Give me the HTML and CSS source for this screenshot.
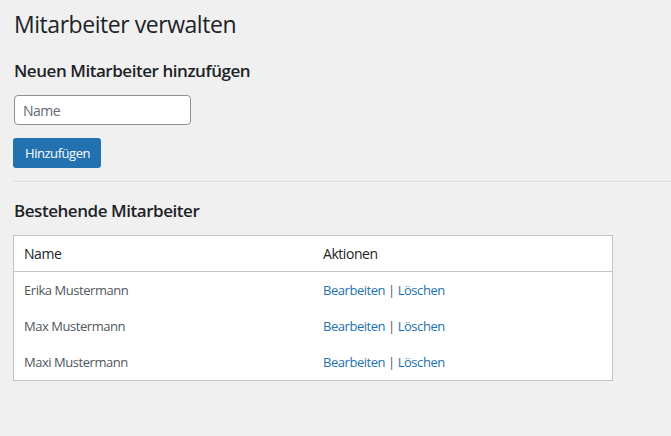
FILE: index.html
```html
<!DOCTYPE html>
<html lang="de">
    <head>
        <meta charset="UTF-8">
        <meta name="viewport" content="width=device-width, initial-scale=1.0">
        <title>Mitarbeiter verwalten</title>
        <link rel="stylesheet" href="styles.css">
    </head>

    <body>
        <div class="wrap">

            <h1>Mitarbeiter verwalten</h1>

            <!-- Neuer Mitarbeiter -->
            <h2>Neuen Mitarbeiter hinzufügen</h2>
            <form class="add-form">
                <input type="text" name="name" placeholder="Name">
                <button type="submit">Hinzufügen</button>
            </form>

            <hr>

            <!-- Liste -->
            <h2>Bestehende Mitarbeiter</h2>
            <table class="list">
                <thead>
                    <tr>
                        <th>Name</th>
                        <th>Aktionen</th>
                    </tr>
                </thead>
                <tbody>
                    <tr>
                        <td>Erika Mustermann</td>
                        <td><a href="#">Bearbeiten</a> | <a href="#">Löschen</a></td>
                    </tr>
                    <tr>
                        <td>Max Mustermann</td>
                        <td><a href="#">Bearbeiten</a> | <a href="#">Löschen</a></td>
                    </tr>
                    <tr>
                        <td>Maxi Mustermann</td>
                        <td><a href="#">Bearbeiten</a> | <a href="#">Löschen</a></td>
                    </tr>
                </tbody>
            </table>

        </div>
    </body>
</html>
```

FILE: styles.css
```css
body {
    margin: 0;
    background: #f0f0f1;
    color: #1d2327;
    font-family: "Open Sans", "Noto Sans", sans-serif;
    font-size: 13px;
    letter-spacing: -0.035em;
}
.wrap {
    padding: 0 0 0 13px;
}
h1 {
    font-size: 23px;
    font-weight: 400;
    line-height: 30px;
    margin: 0;
    padding: 9px 0 4px 1px;
}
h2 {
    font-size: 17px;
    font-weight: 600;
    line-height: 22px;
    margin: 17px 0 13px 1px;
}
.add-form {
    display: flex;
    flex-direction: column;
    align-items: flex-start;
    gap: 13px;
}
.add-form input {
    width: 177px;
    height: 30px;
    box-sizing: border-box;
    margin-left: 1px;
    padding: 0 8px;
    border: 1px solid #8c8f94;
    border-radius: 4px;
    font: inherit;
    font-size: 14px;
    letter-spacing: -0.035em;
    color: #2c3338;
    background: #fff;
}
.add-form input::placeholder {
    color: #646970;
}
.add-form button {
    height: 30px;
    padding: 0 11px 0 12px;
    background-color: #2271b1;
    color: #fff;
    border: none;
    border-radius: 3px;
    font: inherit;
    letter-spacing: -0.035em;
    cursor: pointer;
}
hr {
    border: none;
    border-top: 1px solid #dcdcde;
    border-bottom: 1px solid #f6f7f7;
    margin: 13px 0 0 0;
}
.list {
    width: 600px;
    border: 1px solid #c3c4c7;
    border-collapse: collapse;
    background: #fff;
    table-layout: fixed;
}
.list th {
    text-align: left;
    font-weight: 400;
    font-size: 14px;
    height: 35px;
    padding: 0 10px;
    border-bottom: 1px solid #c3c4c7;
}
.list td {
    color: #50575e;
    height: 36px;
    padding: 0 10px;
}
.list a {
    color: #2271b1;
    text-decoration: none;
}
```
